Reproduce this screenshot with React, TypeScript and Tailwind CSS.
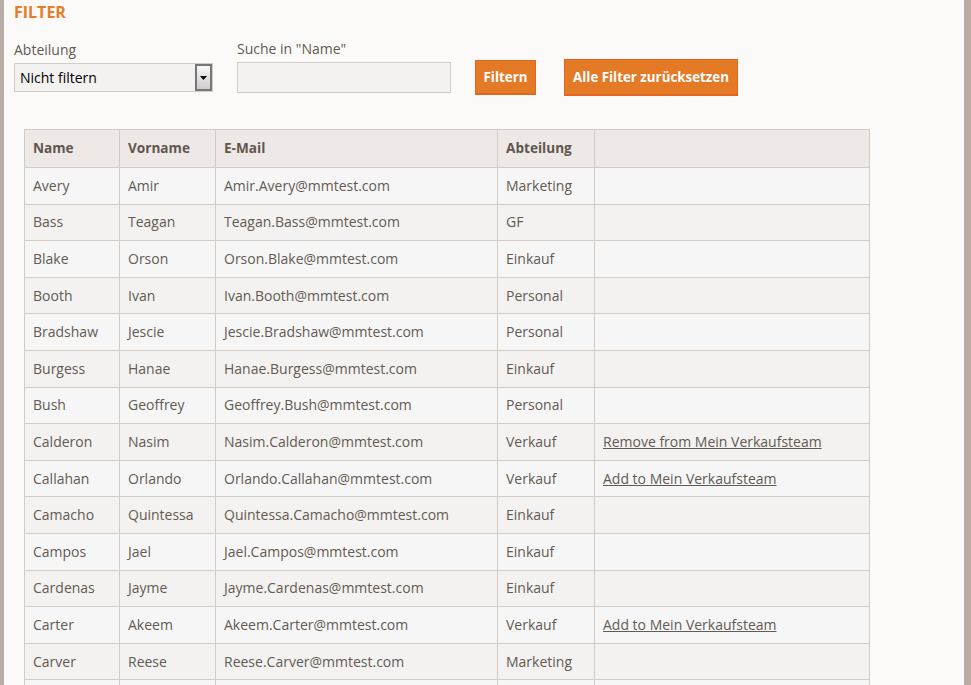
const rows: [string, string, string, string?][] = [
  ["Avery", "Amir", "Marketing"],
  ["Bass", "Teagan", "GF"],
  ["Blake", "Orson", "Einkauf"],
  ["Booth", "Ivan", "Personal"],
  ["Bradshaw", "Jescie", "Personal"],
  ["Burgess", "Hanae", "Einkauf"],
  ["Bush", "Geoffrey", "Personal"],
  ["Calderon", "Nasim", "Verkauf", "Remove from Mein Verkaufsteam"],
  ["Callahan", "Orlando", "Verkauf", "Add to Mein Verkaufsteam"],
  ["Camacho", "Quintessa", "Einkauf"],
  ["Campos", "Jael", "Einkauf"],
  ["Cardenas", "Jayme", "Einkauf"],
  ["Carter", "Akeem", "Verkauf", "Add to Mein Verkaufsteam"],
  ["Carver", "Reese", "Marketing"],
];

export default function App() {
  return (
    <div className="h-[685px] overflow-hidden bg-[#fbfaf8] border-l-4 border-r-[7px] border-[#b9aca4] font-['Open_Sans',sans-serif] text-sm text-[#635a53]">
      <div className="pl-2.5 pt-[2px]">
        <h2 className="text-base leading-[20px] font-bold text-[#e87b28]">FILTER</h2>
        <div className="flex items-start mt-[17px]">
          <div className="w-[199px] mr-6">
            <div className="leading-[19px] mt-[1px]">Abteilung</div>
            <div className="mt-[4px] h-[29px] border border-[#d3cbc4] bg-[#f3f2f0] flex items-center justify-between pl-[5px] text-black">
              <span className="leading-[25px]">Nicht filtern</span>
              <span className="w-[17px] h-[27px] border-2 border-[#777] bg-gradient-to-b from-[#f8f8f8] to-[#cccccc] flex items-center justify-center">
                <svg width="7" height="4" viewBox="0 0 7 4"><path d="M0 0h7L3.5 4z" fill="#000" /></svg>
              </span>
            </div>
          </div>
          <div className="w-[214px] mr-6">
            <div className="leading-[19px]">Suche in "Name"</div>
            <div className="mt-[4px] h-[31px] border border-[#d3cbc4] bg-[#f3f2f0]" />
          </div>
          <button className="mt-[21px] h-[35px] w-[61px] border border-[#e2661f] border-b-2 bg-[#e47a26] pt-px text-[13.33px] font-bold text-white">
            Filtern
          </button>
          <button className="ml-7 mt-[20px] h-[37px] w-[174px] border border-[#e2661f] border-b-2 bg-[#e47a26] pt-px text-[13.33px] font-bold text-white">
            Alle Filter zurücksetzen
          </button>
        </div>
        <table className="ml-2.5 mt-[33px] w-[846px] table-fixed border-collapse border border-[#d3cbc4]">
          <colgroup>
            <col className="w-[95px]" />
            <col className="w-[96px]" />
            <col className="w-[282px]" />
            <col className="w-[97px]" />
            <col />
          </colgroup>
          <thead>
            <tr className="h-[38px] bg-[#eee9e6] text-left text-[#5f564f]">
              {["Name", "Vorname", "E-Mail", "Abteilung", ""].map((h, i) => (
                <th key={i} className="border border-[#d3cbc4] px-2 pb-0.5 text-[13.6px] font-bold">{h}</th>
              ))}
            </tr>
          </thead>
          <tbody>
            {rows.map(([last, first, dept, action], i) => (
              <tr key={last} className={`h-[36.6px] ${i % 2 === 0 ? "bg-[#f7f6f6]" : "bg-[#f3f2f0]"}`}>
                <td className="border border-[#d3cbc4] px-2">{last}</td>
                <td className="border border-[#d3cbc4] px-2">{first}</td>
                <td className="border border-[#d3cbc4] px-2">{`${first}.${last}@mmtest.com`}</td>
                <td className="border border-[#d3cbc4] px-2">{dept}</td>
                <td className="border border-[#d3cbc4] px-2">
                  {action && <a className="underline" href="#">{action}</a>}
                </td>
              </tr>
            ))}
            <tr className="h-[36.6px] bg-[#f7f6f6]">
              <td className="border border-[#d3cbc4]" />
              <td className="border border-[#d3cbc4]" />
              <td className="border border-[#d3cbc4]" />
              <td className="border border-[#d3cbc4]" />
              <td className="border border-[#d3cbc4]" />
            </tr>
          </tbody>
        </table>
      </div>
    </div>
  );
}
